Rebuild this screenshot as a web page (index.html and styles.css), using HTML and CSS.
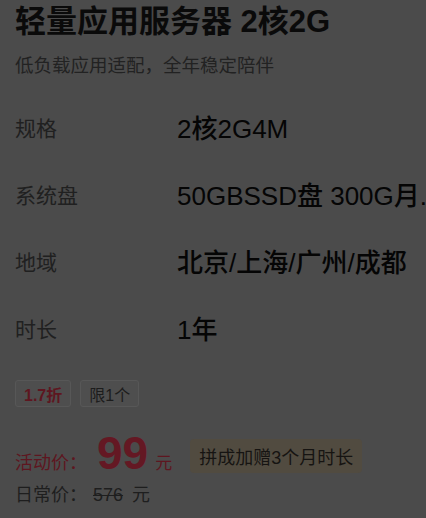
FILE: index.html
```html
<!DOCTYPE html>
<html>
<head>
  <title>轻量应用服务器</title>
  <link rel="stylesheet" href="styles.css">
</head>
<body>

<div class="container">
  <h1 class="title">轻量应用服务器 2核2G</h1>
  <div class="subtitle">低负载应用适配，全年稳定陪伴</div>

  <div class="spec-list">
    <div class="spec-row">
      <div class="spec-label">规格</div>
      <div class="spec-value">2核2G4M</div>
    </div>
    <div class="spec-row">
      <div class="spec-label">系统盘</div>
      <div class="spec-value">50GBSSD盘 300G月.</div>
    </div>
    <div class="spec-row">
      <div class="spec-label">地域</div>
      <div class="spec-value">北京/上海/广州/成都</div>
    </div>
    <div class="spec-row">
      <div class="spec-label">时长</div>
      <div class="spec-value">1年</div>
    </div>
  </div>

  <div class="tags">
    <span class="tag tag-red">1.7折</span>
    <span class="tag">限1个</span>
  </div>

  <div class="price-row">
    <span class="price-label">活动价：</span>
    <span class="price-num">99</span>
    <span class="price-unit">元</span>
    <span class="promo">拼成加赠3个月时长</span>
  </div>

  <div class="old-price">
    <span class="old-label">日常价：</span>
    <span class="old-num">576</span>
    <span class="old-unit">元</span>
  </div>
</div>

</body>
</html>
```

FILE: styles.css
```css
body {
  font-family: "Liberation Sans", "Noto Sans CJK SC", sans-serif;
  background-color: #4b4b4b;
  margin: 0;
  color: #0e0e0e;
  overflow: hidden;
}

.container {
  padding: 2px 0 0 15px;
}

.title {
  font-size: 31px;
  line-height: 40px;
  font-weight: bold;
  margin: 0;
  color: #0a0a0a;
}

.subtitle {
  margin-top: 12px;
  font-size: 18.5px;
  line-height: 24px;
  color: #222;
}

.spec-list {
  margin-top: 15px;
}

.spec-row {
  display: flex;
  align-items: center;
  height: 67px;
}

.spec-label {
  width: 162px;
  flex-shrink: 0;
  font-size: 21px;
  color: #202020;
}

.spec-value {
  font-size: 26px;
  font-weight: 500;
  color: #050505;
  white-space: nowrap;
}

.tags {
  display: flex;
  gap: 9px;
  margin-top: 19px;
}

.tag {
  display: inline-flex;
  align-items: center;
  height: 25px;
  padding: 0 8px;
  border: 1px solid #575757;
  border-radius: 3px;
  background-color: #4e4e4e;
  font-size: 16px;
  color: #1c1c1c;
}

.tag-red {
  color: #5e1620;
  font-weight: bold;
}

.price-row {
  display: flex;
  align-items: baseline;
  margin-top: 21px;
  height: 50px;
}

.price-label {
  font-size: 18px;
  color: #5e1620;
}

.price-num {
  margin-left: 10px;
  font-size: 46px;
  line-height: 50px;
  font-weight: bold;
  color: #641823;
}

.price-unit {
  margin-left: 7px;
  font-size: 17px;
  color: #5e1620;
}

.promo {
  margin-left: 18px;
  padding: 4px 9px;
  border-radius: 4px;
  background-color: #514b40;
  font-size: 18px;
  color: #161412;
  align-self: center;
  margin-top: 6px;
}

.old-price {
  display: flex;
  align-items: baseline;
  margin-top: 2px;
  font-size: 18px;
  color: #1e1e1e;
}

.old-num {
  margin-left: 6px;
  text-decoration: line-through;
}

.old-unit {
  margin-left: 9px;
}
```
